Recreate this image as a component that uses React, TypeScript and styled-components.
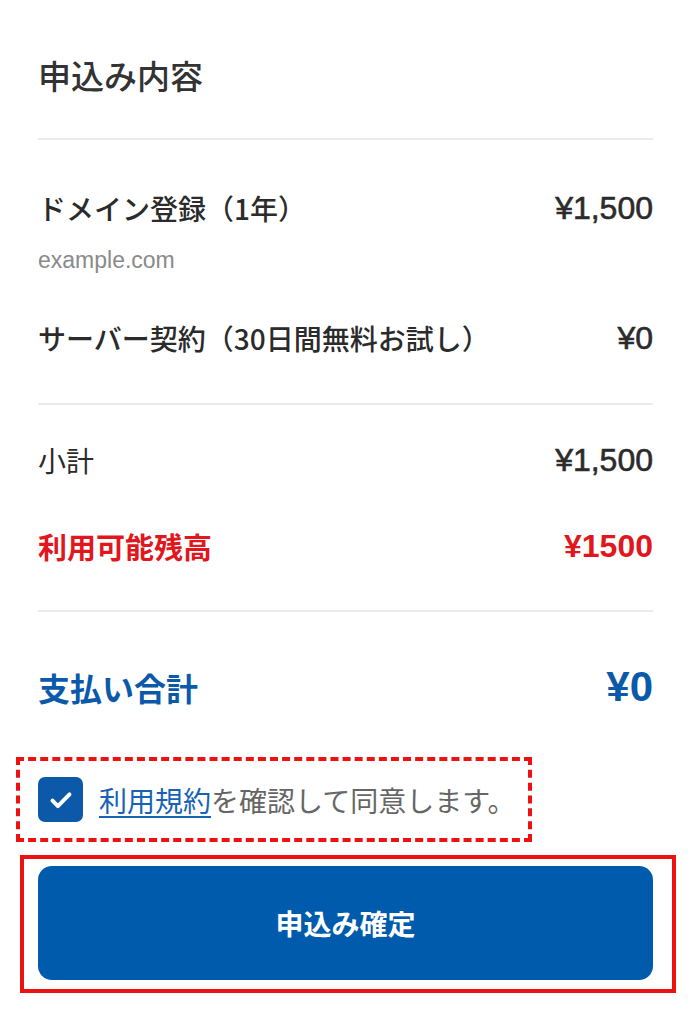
import React from 'react';
import styled, { createGlobalStyle } from 'styled-components';

const GlobalStyle = createGlobalStyle`
	html, body {
		margin: 0;
		padding: 0;
		background: #ffffff;
	}
	body {
		font-family: "Liberation Sans", "Noto Sans CJK JP", sans-serif;
		color: #333333;
	}
`;

interface Line {
	label: string;
	amount: string;
	note?: string;
}

const items: Line[] = [
	{ label: 'ドメイン登録（1年）', amount: '¥1,500', note: 'example.com' },
	{ label: 'サーバー契約（30日間無料お試し）', amount: '¥0' },
];

function App() {
	return (
		<Page>
			<GlobalStyle />
			<Header>
				<Title>申込み内容</Title>
			</Header>

			<Section $top={48} $bottom={45}>
				{items.map((item) => (
					<Item key={item.label}>
						<Row>
							<Label>{item.label}</Label>
							<Amount>{item.amount}</Amount>
						</Row>
						{item.note && <Note>{item.note}</Note>}
					</Item>
				))}
			</Section>

			<Section $top={35} $bottom={44} $gap={46}>
				<Row>
					<Label $light>小計</Label>
					<Amount>¥1,500</Amount>
				</Row>
				<Row>
					<Label $tone="red">利用可能残高</Label>
					<Amount $tone="red">¥1500</Amount>
				</Row>
			</Section>

			<TotalRow>
				<TotalLabel>支払い合計</TotalLabel>
				<TotalAmount>¥0</TotalAmount>
			</TotalRow>

			<AgreeBox>
				<CheckBox>
					<svg width="34" height="34" viewBox="0 0 24 24" fill="none">
						<path
							d="M6 12.5l3.8 3.8L18 8"
							stroke="#ffffff"
							strokeWidth="2.8"
							strokeLinecap="round"
							strokeLinejoin="round"
						/>
					</svg>
				</CheckBox>
				<AgreeText>
					<TermsLink href="#">利用規約</TermsLink>を確認して同意します。
				</AgreeText>
			</AgreeBox>

			<SubmitFrame>
				<SubmitButton type="button">申込み確定</SubmitButton>
			</SubmitFrame>
		</Page>
	);
}

const Page = styled.div`
	width: 693px;
	min-height: 1024px;
	box-sizing: border-box;
	padding: 0 40px 0 38px;
	display: flex;
	flex-direction: column;
`;

const Header = styled.div`
	padding: 51px 0 39px;
	border-bottom: 2px solid #ebebeb;
`;

const Title = styled.h1`
	margin: 0;
	font-family: "Noto Sans CJK JP", sans-serif;
	font-size: 33px;
	line-height: 48px;
	font-weight: 500;
	color: #333333;
`;

const Section = styled.div<{ $top: number; $bottom: number; $gap?: number }>`
	padding: ${(p) => p.$top}px 0 ${(p) => p.$bottom}px;
	border-bottom: 2px solid #ebebeb;
	display: flex;
	flex-direction: column;
	gap: ${(p) => p.$gap ?? 43}px;
`;

const Item = styled.div`
	display: flex;
	flex-direction: column;
	gap: 17px;
`;

const Row = styled.div`
	display: flex;
	align-items: center;
	justify-content: space-between;
	height: 40px;
`;

const toneColor = (tone?: string) => (tone === 'red' ? '#e2161d' : '#2b2b2b');

const Label = styled.span<{ $tone?: string; $light?: boolean }>`
	font-family: "Noto Sans CJK JP", sans-serif;
	font-size: ${(p) => (p.$tone === 'red' ? 29 : 28)}px;
	line-height: 40px;
	font-weight: ${(p) => (p.$tone === 'red' ? 700 : p.$light ? 400 : 500)};
	color: ${(p) => toneColor(p.$tone)};
`;

const Amount = styled.span<{ $tone?: string }>`
	font-family: "Liberation Sans", Arial, sans-serif;
	font-size: 32px;
	line-height: 40px;
	font-weight: ${(p) => (p.$tone === 'red' ? 700 : 400)};
	color: ${(p) => toneColor(p.$tone)};
	-webkit-text-stroke: ${(p) => (p.$tone === 'red' ? '0' : '0.6px')} currentColor;
`;

const Note = styled.span`
	font-family: "Liberation Sans", sans-serif;
	font-size: 23px;
	line-height: 30px;
	color: #8a8a8a;
`;

const TotalRow = styled.div`
	display: flex;
	align-items: center;
	justify-content: space-between;
	height: 50px;
	margin-top: 50px;
`;

const TotalLabel = styled.span`
	font-family: "Noto Sans CJK JP", sans-serif;
	font-size: 32px;
	line-height: 50px;
	font-weight: 700;
	color: #0a5aa9;
`;

const TotalAmount = styled.span`
	font-family: "Liberation Sans", Arial, sans-serif;
	font-size: 42px;
	line-height: 50px;
	font-weight: 700;
	color: #0a5aa9;
`;

const AgreeBox = styled.label`
	align-self: flex-start;
	margin: 45px 0 0 -22px;
	padding: 16px 18px 16px 18px;
	border: 4px dashed #ee1111;
	display: flex;
	align-items: center;
	gap: 16px;
	width: 472px;
`;

const CheckBox = styled.span`
	width: 45px;
	height: 45px;
	flex: none;
	border-radius: 7px;
	background: #0b59a8;
	display: flex;
	align-items: center;
	justify-content: center;
`;

const AgreeText = styled.span`
	font-family: "Noto Sans CJK JP", sans-serif;
	font-size: 28px;
	line-height: 40px;
	color: #666666;
	white-space: nowrap;
`;

const TermsLink = styled.a`
	color: #1762b5;
	text-decoration: underline;
	text-underline-offset: 4px;
`;

const SubmitFrame = styled.div`
	margin: 13px -23px 0 -18px;
	padding: 7px 19px 9px 14px;
	border: 4px solid #ee1111;
`;

const SubmitButton = styled.button`
	width: 100%;
	height: 114px;
	border: none;
	border-radius: 14px;
	background: #005bac;
	color: #ffffff;
	font-family: "Noto Sans CJK JP", sans-serif;
	font-size: 28px;
	font-weight: 700;
	cursor: pointer;
`;

export default App;
